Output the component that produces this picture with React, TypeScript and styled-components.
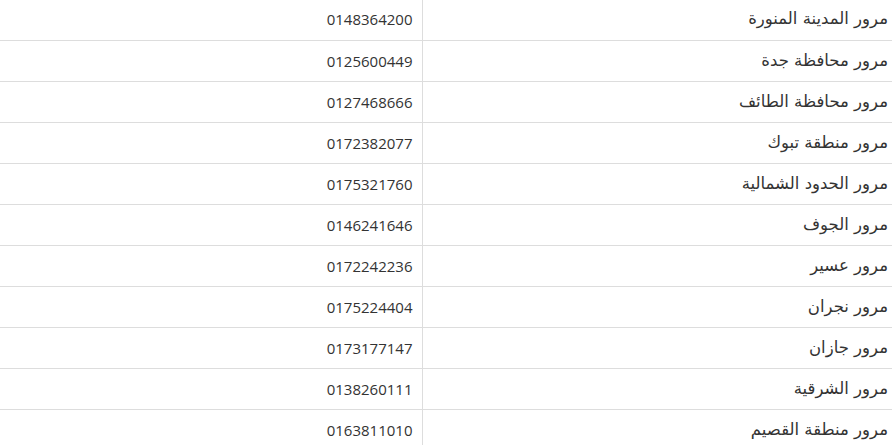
import React from "react";
import styled, { createGlobalStyle } from "styled-components";

const Global = createGlobalStyle`
  html, body { margin: 0; padding: 0; background: #fff; overflow: hidden; }
  body { font-family: "Open Sans", "Noto Sans", sans-serif; }
`;

const Table = styled.table`
  width: 892px;
  margin-top: -1px;
  border-collapse: collapse;
  direction: rtl;
  font-family: "Open Sans", "Noto Sans", sans-serif;
  font-size: 15px;
  color: #333;
`;

const Row = styled.tr`
  border-bottom: 1px solid #ddd;
`;

const Cell = styled.td<{ $w?: number; $num?: boolean }>`
  height: 41px;
  box-sizing: border-box;
  padding: 0 10px;
  line-height: 20px;
  text-align: right;
  vertical-align: middle;
  width: ${(p) => (p.$w ? `${p.$w}px` : "auto")};
  border-left: ${(p) => (p.$num ? "none" : "1px solid #ddd")};
  direction: ${(p) => (p.$num ? "ltr" : "rtl")};
  font-family: ${(p) => (p.$num ? `"Open Sans", sans-serif` : `"DejaVu Sans", sans-serif`)};
  font-size: ${(p) => (p.$num ? "15px" : "16.5px")};
  padding-right: ${(p) => (p.$num ? "9px" : "4px")};
`;

const rows: [string, string][] = [
  ["مرور المدينة المنورة", "0148364200"],
  ["مرور محافظة جدة", "0125600449"],
  ["مرور محافظة الطائف", "0127468666"],
  ["مرور منطقة تبوك", "0172382077"],
  ["مرور الحدود الشمالية", "0175321760"],
  ["مرور الجوف", "0146241646"],
  ["مرور عسير", "0172242236"],
  ["مرور نجران", "0175224404"],
  ["مرور جازان", "0173177147"],
  ["مرور الشرقية", "0138260111"],
  ["مرور منطقة القصيم", "0163811010"],
];

export default function App() {
  return (
    <>
      <Global />
      <Table>
        <tbody>
          {rows.map(([name, phone]) => (
            <Row key={phone}>
              <Cell $w={470}>{name}</Cell>
              <Cell $num>{phone}</Cell>
            </Row>
          ))}
        </tbody>
      </Table>
    </>
  );
}
